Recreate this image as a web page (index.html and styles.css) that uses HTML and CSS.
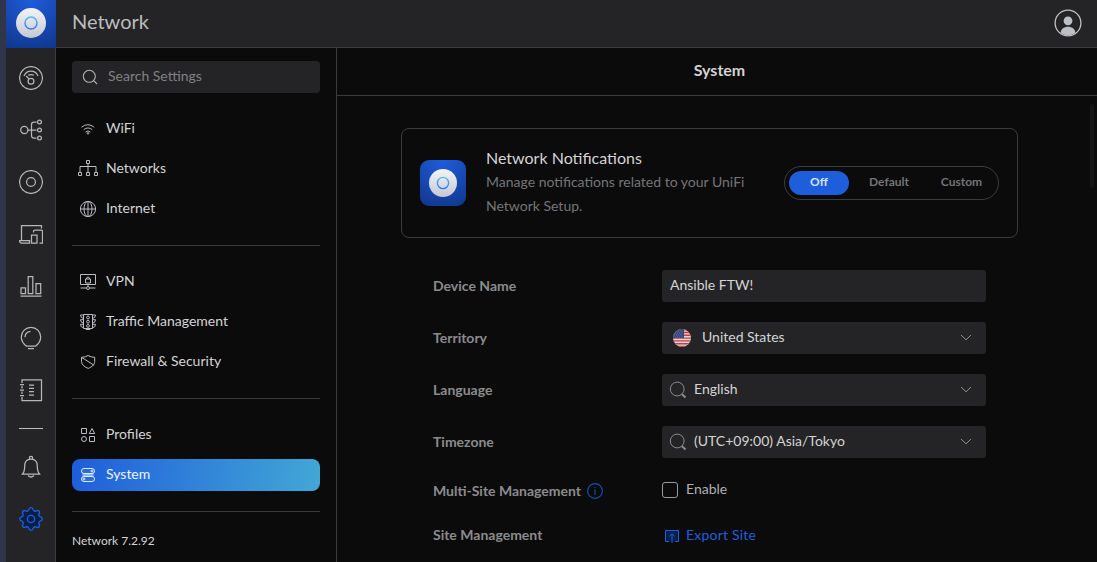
FILE: index.html
```html
<!DOCTYPE html>
<html lang="en">
<head>
<meta charset="utf-8">
<title>Network - System</title>
<link rel="stylesheet" href="styles.css">
</head>
<body>
<svg width="0" height="0" class="defs">
  <defs>
    <linearGradient id="disc" x1="0" y1="0" x2="0" y2="1"><stop offset="0" stop-color="#f3f4f8"/><stop offset="1" stop-color="#c5c8d4"/></linearGradient>
    <linearGradient id="ring" x1="0" y1="0" x2="0" y2="1"><stop offset="0" stop-color="#55bdf0"/><stop offset="1" stop-color="#3478f6"/></linearGradient>
    <symbol id="logo" viewBox="0 0 30 30"><circle cx="15" cy="15" r="15" fill="url(#disc)"/><circle cx="15" cy="15" r="6" fill="none" stroke="url(#ring)" stroke-width="1.5"/></symbol>
    <symbol id="lens" viewBox="0 0 18 18"><circle cx="8.2" cy="8" r="6.9" fill="none" stroke="#8c8d90"/><path d="M13 13.3l3.6 3.2" stroke="#8c8d90" stroke-width="2"/></symbol>
  </defs>
</svg>
<div class="app">
  <nav class="rail">
    <div class="rail-logo"><svg width="30" height="30"><use href="#logo"/></svg></div>
    <a class="rail-item"><svg viewBox="0 0 24 24"><circle cx="12" cy="12" r="11.4"/><path d="M5 10C6.300 6.700 9 5 12 5s5.700 1.700 7 5M7.200 10l3 3.100M9.200 9.300q2.800-1.500 5.600 0"/><circle cx="12" cy="15.300" r="2.900"/></svg></a>
    <a class="rail-item"><svg viewBox="0 0 24 24"><circle cx="5.300" cy="12" r="3.600"/><path d="M9 12h8.500M17.500 4H15q-2.500 0-2.500 2.500v11q0 2.500 2.500 2.500h2.500"/><circle cx="20.500" cy="4" r="1.900"/><circle cx="20.500" cy="12" r="1.900"/><circle cx="20.500" cy="20" r="1.900"/></svg></a>
    <a class="rail-item"><svg viewBox="0 0 24 24"><circle cx="12" cy="12" r="11.400"/><circle cx="12" cy="12" r="4.400"/></svg></a>
    <a class="rail-item"><svg viewBox="0 0 24 24"><path d="M2.500 18.500v-15h20v3M.5 18.500h10v2.500h-8Q.7 21 .5 18.500zM12.500 21v-8h5.500v8zM14.500 10.500v-1q0-1.500 1.500-1.500h6q1.500 0 1.500 1.500V21h-3"/></svg></a>
    <a class="rail-item"><svg viewBox="0 0 24 24"><path d="M2 19.500v-5.700h4.500v5.700zM9.200 19.500V2.500h4.600v17zM17 19.500v-10h4.700v10zM1.500 22h21"/></svg></a>
    <a class="rail-item"><svg viewBox="0 0 24 24"><path d="M7.500 20.200C4 17.500 2.300 14.500 2.300 11a9.700 9.700 0 0 1 19.400 0c0 3.500-1.700 6.500-5.200 9.200zM6 11.300c0-3.500 2.200-5.600 5.500-6M9 22.500h6"/></svg></a>
    <a class="rail-item"><svg viewBox="0 0 24 24"><path d="M3 5V1.800h19.500v20.700H3V19M3 8v2.500M3 13.500V16M1 6.500h4M1 12h4M1 17.500h4M10 7h5M10 10.300h5M10 13.700h5M10 17h5"/></svg></a>
    <span class="rail-sep"></span>
    <a class="rail-item bell"><svg viewBox="0 0 24 24"><path d="M3.500 19c1.800-2 2.200-4 2.200-8C5.700 6.500 8.300 4 12 4s6.300 2.500 6.300 7c0 4 .4 6 2.200 8zM10.500 4V2q1.500-1.200 3 0v2M9 20.500q3 3 6 0"/></svg></a>
    <a class="rail-item gear"><svg viewBox="0 0 24 24"><path d="M12 .7C14.300.7 13.500 3.300 15.400 4.100S18.400 2.400 20 4s-.9 2.700-.1 4.600 3.400 1.100 3.400 3.400-2.600 1.500-3.400 3.400 1.700 3 .1 4.600-2.700-.9-4.600-.1-1.100 3.400-3.400 3.400-1.500-2.600-3.400-3.400S5.600 21.600 4 20s.9-2.700.1-4.600S.7 14.300.7 12s2.600-1.500 3.400-3.400S2.400 5.600 4 4s2.700.9 4.600.1S9.700.7 12 .7z"/><circle cx="12" cy="12" r="3.700"/></svg></a>
  </nav>
  <div class="main">
    <header class="topbar">
      <h1>Network</h1>
      <svg class="avatar" width="28" height="28" viewBox="0 0 28 28"><circle cx="14" cy="14" r="12.900" fill="none" stroke="#bfc0c4" stroke-width="1.300"/><circle cx="14" cy="11.800" r="4.400" fill="#bfc0c4"/><path d="M6.600 24c.4-4 3.200-6.200 7.400-6.200s7 2.200 7.400 6.200A12.900 12.900 0 0 1 6.600 24z" fill="#bfc0c4"/></svg>
    </header>
    <div class="body">
      <aside class="side">
        <div class="search"><svg width="16" height="16" viewBox="0 0 16 16"><circle cx="7.300" cy="7.300" r="6"/><path d="M11.700 11.700l3.300 3.300"/></svg><span>Search Settings</span></div>
        <a class="link first"><svg viewBox="0 0 20 20"><path d="M3.500 9.200q6.300-5 12.700 0M5.700 11.700q4.300-3.500 8.600 0M7.500 14q2.500-2 5 0"/><circle cx="10" cy="15.400" r=".8"/></svg>WiFi</a>
        <a class="link"><svg viewBox="0 0 20 20"><path d="M8.500 2.500h3v3h-3zM.5 14.500h3v3h-3zM8.500 14.500h3v3h-3zM16.500 14.500h3v3h-3zM10 5.500v9M2 14.500v-6h16v6"/></svg>Networks</a>
        <a class="link"><svg viewBox="0 0 20 20"><circle cx="10" cy="11" r="7.600"/><ellipse cx="10" cy="11" rx="4" ry="7.600"/><path d="M10 3.400v15.200M2.400 11h15.200"/></svg>Internet</a>
        <hr>
        <a class="link"><svg viewBox="0 0 20 20"><path d="M2.500 3.500h15v10h-15zM7.500 8h5v4h-5zM8.500 8V6.800q1.500-1.600 3 0V8M2.500 17h5.500M12 17h5.500M10 13.500v1.500"/><circle cx="10" cy="17" r="1.500"/></svg>VPN</a>
        <a class="link"><svg viewBox="0 0 20 20"><path d="M5.500 3.500h9v14h-9zM8 17.500v1h4v-1M5.500 4h-3q0 3 3 3.500M5.500 8.700h-3q0 3 3 3.500M5.500 13.300h-3q0 3 3 3.500M14.500 4h3q0 3-3 3.500M14.500 8.700h3q0 3-3 3.500M14.500 13.300h3q0 3-3 3.500"/><circle cx="10" cy="6.500" r="1.400"/><circle cx="10" cy="10.700" r="1.400"/><circle cx="10" cy="14.900" r="1.400"/></svg>Traffic Management</a>
        <a class="link"><svg viewBox="0 0 20 20"><path d="M3.500 6.300Q7.500 6.300 10 4.500q3 1.800 6.700 1.800v4.200c0 3.200-2.700 5.300-6.500 6.900C6.500 16 3.800 14 3.500 10.500zM3.500 6.300l12.600 8"/></svg>Firewall &amp; Security</a>
        <hr>
        <a class="link"><svg viewBox="0 0 20 20"><path d="M3.500 4.500h5v5h-5zM14 4.500l2.700 5h-5.400zM11.500 12.500h5v5h-5z"/><circle cx="6" cy="15" r="2.500"/></svg>Profiles</a>
        <a class="link active"><svg viewBox="0 0 20 20"><rect x="4.500" y="9" width="11" height="4" fill="#8cb5ef" stroke="none"/><rect x="3.500" y="4.500" width="13" height="5" rx="2.400" fill="#286bdc"/><rect x="3.500" y="12.500" width="13" height="5" rx="2.400" fill="#286bdc"/><circle cx="14" cy="7" r="1"/><circle cx="6" cy="15" r="1"/></svg>System</a>
        <hr>
        <div class="version">Network 7.2.92</div>
      </aside>
      <main class="content">
        <h2>System</h2>
        <div class="scroll">
          <section class="card">
            <div class="app-icon"><svg width="28" height="28"><use href="#logo"/></svg></div>
            <div class="card-text"><h3>Network Notifications</h3><p>Manage notifications related to your UniFi Network Setup.</p></div>
            <div class="seg"><span class="on">Off</span><span class="default">Default</span><span class="custom">Custom</span></div>
          </section>
          <div class="form">
            <label>Device Name</label><div class="field">Ansible FTW!</div>
            <label>Territory</label><div class="field"><svg class="flag" width="18" height="18" viewBox="0 0 18 18"><clipPath id="round"><circle cx="9" cy="9" r="9"/></clipPath><g clip-path="url(#round)"><path fill="#d8d8d8" d="M0 0h18v18H0z"/><path stroke="#c63d49" stroke-width="1.400" d="M0 .7h18M0 3.500h18M0 6.300h18M0 9.100h18M0 11.900h18M0 14.700h18M0 17.500h18"/><path fill="#34467e" d="M0 0h11v9H0z"/><path stroke="#8792b7" stroke-width=".8" stroke-dasharray=".8 1.400" d="M1 2h9M2 4h8M1 6h9M2 8h8"/></g></svg><span>United States</span><svg class="chev" width="12" height="7" viewBox="0 0 12 7"><path d="M1 1l5 4.800L11 1"/></svg></div>
            <label>Language</label><div class="field"><svg class="lens" width="18" height="18"><use href="#lens"/></svg><span>English</span><svg class="chev" width="12" height="7" viewBox="0 0 12 7"><path d="M1 1l5 4.800L11 1"/></svg></div>
            <label>Timezone</label><div class="field"><svg class="lens" width="18" height="18"><use href="#lens"/></svg><span>(UTC+09:00) Asia/Tokyo</span><svg class="chev" width="12" height="7" viewBox="0 0 12 7"><path d="M1 1l5 4.800L11 1"/></svg></div>
            <label class="multi">Multi-Site Management <svg class="info" width="16" height="16" viewBox="0 0 16 16"><circle cx="8" cy="8" r="7.400"/><path d="M8 6.500V12M8 4v1.300"/></svg></label><div class="check"><i></i>Enable</div>
            <label class="site">Site Management</label><div class="export"><svg width="16" height="16" viewBox="0 0 16 16"><path class="tray" d="M5 13.500H1.500v-11h13v11H11"/><path d="M8 15V6M5.300 8.500L8 5.800l2.700 2.700"/></svg>Export Site</div>
          </div>
        </div>
        <i class="thumb"></i>
      </main>
    </div>
  </div>
</div>
</body>
</html>
```
FILE: styles.css
```css
* { box-sizing: border-box; }
body { margin: 0; overflow: hidden; background: #0b0b0b; color: #d4d4d5; font: 14px/24px Lato, sans-serif; }
h1, h2, h3, p { margin: 0; font-weight: 400; }
.defs { position: absolute; }
.app { display: flex; height: 562px; border-left: 6px solid #31354a; }
svg { fill: none; flex: none; }

.rail { flex: 0 0 50px; min-width: 0; background: #242426; border-right: 1px solid #3b3c40; display: flex; flex-direction: column; }
.rail-logo { width: 50px; height: 48px; flex: none; display: flex; align-items: center; justify-content: center; padding-bottom: 2px; background: radial-gradient(circle at 50% 0, #1f5ddc, #0f3488 105%); }
.rail-item { height: 52px; flex: none; display: flex; align-items: center; justify-content: center; padding-left: 1px; }
.rail-logo + .rail-item { margin-top: 4px; }
.rail-item svg { width: 24px; height: 24px; stroke: #b5b6b9; stroke-width: 1.25; }
.rail-sep { height: 1px; flex: none; width: 24px; margin: 12px 0 12px 13px; background: #c0c0c2; }
.rail-item.gear svg { stroke: #1f5fdd; fill: #071e48; stroke-width: 1.3; }

.main { flex: 1; min-width: 0; display: flex; flex-direction: column; }
.topbar { height: 48px; flex: none; background: #242426; border-bottom: 1px solid #3b3c40; display: flex; align-items: center; justify-content: space-between; padding: 0 15px 2px 16px; }
h1 { font-size: 20px; color: #bcbcbe; padding-bottom: 3px; }
.body { flex: 1; min-height: 0; display: flex; }

.side { flex: 0 0 281px; border-right: 1px solid #3b3c40; padding: 13px 16px 0; }
.search { height: 32px; border-radius: 4px; background: #242426; color: #818184; display: flex; align-items: center; gap: 10px; padding-left: 10px; }
.search span { padding-bottom: 2px; }
.search svg { stroke: #b2b3b6; stroke-width: 1.1; }
.link { height: 32px; margin-bottom: 8px; display: flex; align-items: center; padding: 0 0 2px 6px; gap: 8px; border-radius: 8px; }
.link.first { margin-top: 20px; }
.link svg { width: 20px; height: 20px; stroke: #bcbdc0; stroke-width: 1; }
.link.active { background: linear-gradient(100deg, #1f5ddb, #42a8d6); color: #eef3fb; }
.link.active svg { stroke: #e3ecfa; }
hr { height: 1px; border: 0; background: #38393c; margin: 20px 0; }
.version { font-size: 12px; line-height: 18px; }

.content { flex: 1; min-width: 0; position: relative; display: flex; flex-direction: column; }
h2 { height: 48px; flex: none; border-bottom: 1px solid #3b3c40; font-size: 16px; line-height: 44px; font-weight: 700; text-align: center; padding-left: 5px; }
.scroll { padding: 32px 79px 0 64px; }
.card { height: 110px; border: 1px solid #3b3c40; border-radius: 8px; display: flex; align-items: center; padding: 0 18px; }
.app-icon { width: 46px; height: 46px; border-radius: 9px; flex: none; display: flex; align-items: center; justify-content: center; background: radial-gradient(circle at 50% 0, #1f5ddc, #0f3488 105%); }
.card-text { width: 270px; margin-left: 20px; padding-bottom: 2px; }
h3 { font-size: 16px; line-height: 24px; }
.card-text p { color: #757578; }
.seg { width: 215px; height: 34px; margin-left: auto; border: 1px solid #3b3c40; border-radius: 17px; padding: 4px; display: flex; font-size: 12px; font-weight: 700; line-height: 22px; color: #747477; text-align: center; }
.seg .on { width: 60px; height: 24px; border-radius: 12px; background: #1f5edb; color: #d7e2f8; }
.seg .default { width: 80px; }
.seg .custom { width: 65px; }
.form { display: grid; grid-template-columns: 229px 324px; grid-template-rows: 32px 32px 32px 32px 24px 24px; row-gap: 20px; padding: 32px 0 0 32px; }
label { font-weight: 700; color: #8b8b8d; display: flex; align-items: center; }
.field { border-radius: 3px; background: #242426; display: flex; align-items: center; padding: 0 14px 2px 8px; }
.field span { flex: 1; }
.flag { margin: 2px 11px 0 3px; }
.lens { margin: 2px 7px 0 -1px; }
.chev { stroke: #8f9093; }
label.multi, label.site { padding-top: 2px; }
.multi svg { margin-left: 6px; stroke: #1c50b6; stroke-width: 1.1; }
.check { display: flex; align-items: center; gap: 8px; padding-bottom: 2px; color: #b0b0b2; }
.check i { width: 16px; height: 16px; border: 1px solid #98989d; border-radius: 3px; margin-top: 1px; }
.export { display: flex; align-items: center; gap: 6px; padding: 2px 0 0 2px; color: #1f5edb; letter-spacing: .2px; }
.export svg { stroke: #1f5edb; margin-top: 2px; }
.tray { fill: #07204a; }
.thumb { position: absolute; right: 3px; top: 56px; width: 4px; height: 84px; border-radius: 2px; background: #151516; }
```
